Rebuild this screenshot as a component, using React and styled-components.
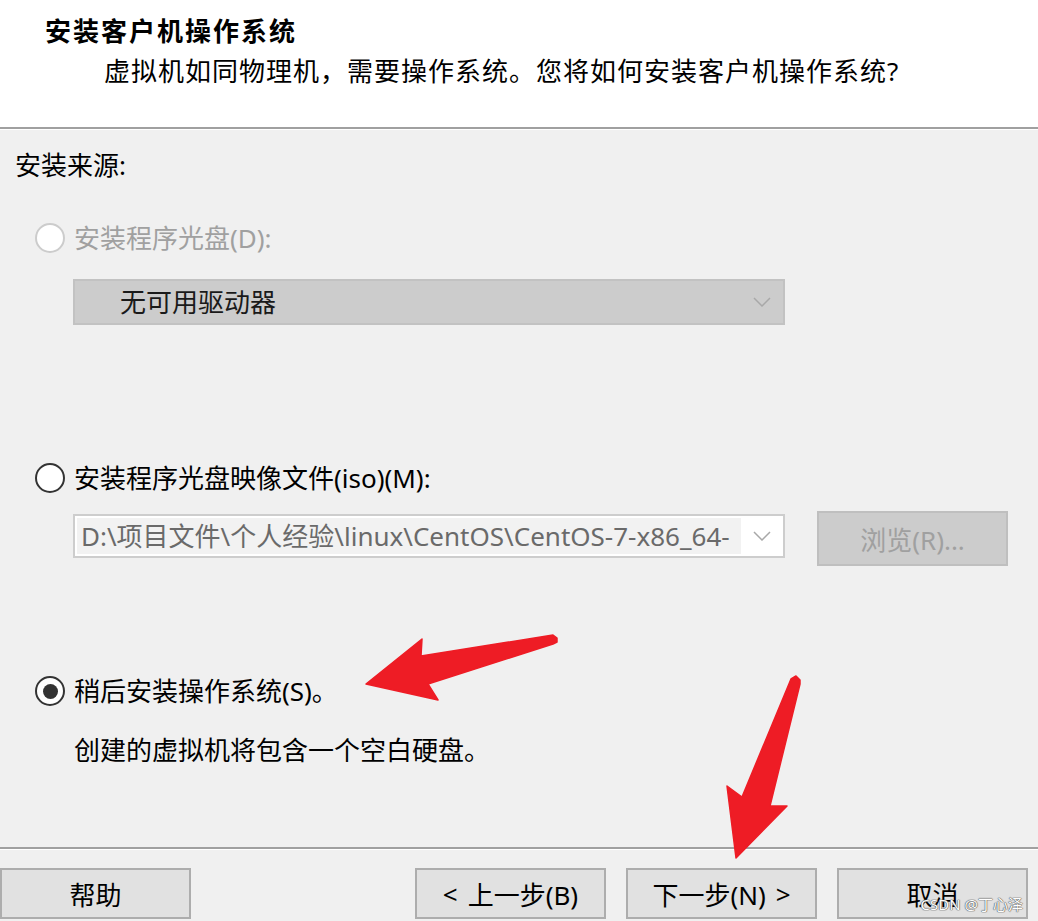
import React from 'react'
import styled, { createGlobalStyle } from 'styled-components'

const GlobalStyle = createGlobalStyle`
  html, body {
    margin: 0;
    padding: 0;
    background: #f0f0f0;
  }
  body {
    font-family: "Noto Sans", "Noto Sans CJK SC", sans-serif;
    color: #000;
  }
`

const Page = styled.div`
  position: relative;
  width: 1038px;
  height: 921px;
  overflow: hidden;
  display: flex;
  flex-direction: column;
  background: #f0f0f0;
`

const Header = styled.div`
  height: 129px;
  box-sizing: border-box;
  background: #ffffff;
  padding: 14px 0 0 45px;
  border-bottom: 2px solid #a0a0a0;
  box-shadow: 0 1px 0 #ffffff;
`

const Title = styled.div`
  font-size: 26px;
  line-height: 34px;
  font-weight: 700;
  letter-spacing: 2px;
`

const Subtitle = styled.div`
  margin: 6px 0 0 59px;
  font-size: 26px;
  line-height: 34px;
  letter-spacing: 1px;
`

const Body = styled.div`
  flex: 1;
  padding: 19px 0 0 15px;
  display: flex;
  flex-direction: column;
`

const Label = styled.div`
  font-size: 26px;
  line-height: 34px;
`

const RadioRow = styled.div`
  display: flex;
  align-items: center;
  gap: 9px;
  margin-top: ${(p) => p.top}px;
  margin-left: 20px;
  font-size: 26px;
  line-height: 34px;
  color: ${(p) => (p.disabled ? '#a0a0a0' : '#000')};
`

const RadioCircle = styled.span`
  width: 30px;
  height: 30px;
  box-sizing: border-box;
  border-radius: 50%;
  background: #ffffff;
  border: 2px solid ${(p) => (p.disabled ? '#cccccc' : '#333333')};
  display: flex;
  align-items: center;
  justify-content: center;
`

const RadioDot = styled.span`
  width: 15px;
  height: 15px;
  border-radius: 50%;
  background: #333333;
`

const Indented = styled.div`
  margin-left: 58px;
  margin-top: ${(p) => p.top}px;
`

const Select = styled.div`
  width: 712px;
  height: ${(p) => p.h}px;
  box-sizing: border-box;
  display: flex;
  align-items: center;
  border: 2px solid ${(p) => (p.disabled ? '#c2c2c2' : '#cdcdcd')};
  background: ${(p) => (p.disabled ? '#cccccc' : '#ffffff')};
  padding: 0 10px 0 ${(p) => p.pad}px;
  font-size: 26px;
`

const SelectText = styled.span`
  flex: 1;
  min-width: 0;
  white-space: nowrap;
  overflow: hidden;
  color: ${(p) => (p.muted ? '#6a6a6a' : '#1a1a1a')};
  line-height: 36px;
  background: ${(p) => (p.muted ? '#f2f2f2' : 'transparent')};
  padding-left: ${(p) => (p.muted ? 4 : 0)}px;
  margin-right: 12px;
`

const Chevron = styled.svg`
  width: 18px;
  height: 10px;
  flex: none;
  margin-right: 2px;
`

const FileRow = styled.div`
  display: flex;
  align-items: flex-start;
  gap: 32px;
  margin-left: 58px;
  margin-top: 16px;
`

const SelectWrap = styled.div`
  margin-top: 3px;
`

const BrowseButton = styled.div`
  width: 191px;
  height: 55px;
  box-sizing: border-box;
  background: #cccccc;
  border: 2px solid #bfbfbf;
  color: #a0a0a0;
  font-size: 26px;
  display: flex;
  align-items: center;
  justify-content: center;
`

const Description = styled.div`
  margin: 25px 0 0 59px;
  font-size: 26px;
  line-height: 34px;
`

const Footer = styled.div`
  height: 74px;
  box-sizing: border-box;
  border-top: 2px solid #a0a0a0;
  box-shadow: inset 0 1px 0 #ffffff;
  padding: 19px 10px 0 0;
  display: flex;
  gap: 20px;
`

const Spacer = styled.div`
  flex: 1;
`

const Button = styled.div`
  width: 191px;
  height: 51px;
  box-sizing: border-box;
  background: #e1e1e1;
  border: 2px solid #adadad;
  font-size: 26px;
  display: flex;
  align-items: center;
  justify-content: center;
  gap: ${(p) => p.gap || 0}px;
`

const Overlay = styled.svg`
  position: absolute;
  left: 0;
  top: 0;
  width: 1038px;
  height: 921px;
  pointer-events: none;
`

const Watermark = styled.div`
  position: absolute;
  right: 15px;
  bottom: 8px;
  font-size: 15px;
  line-height: 18px;
  color: #ffffff;
  text-shadow: 0 0 1px #555, 0 0 1px #555, 0 0 1px #555;
`

const Arrow = () => (
  <Chevron viewBox="0 0 18 10">
    <polyline points="1,1 9,9 17,1" fill="none" stroke="#a8a8a8" strokeWidth="1.5" />
  </Chevron>
)

export default function App() {
  return (
    <Page>
      <GlobalStyle />
      <Header>
        <Title>安装客户机操作系统</Title>
        <Subtitle>虚拟机如同物理机，需要操作系统。您将如何安装客户机操作系统?</Subtitle>
      </Header>
      <Body>
        <Label>安装来源:</Label>
        <RadioRow top={39} disabled>
          <RadioCircle disabled />
          安装程序光盘(D):
        </RadioRow>
        <Indented top={24}>
          <Select disabled h={46} pad={45}>
            <SelectText>无可用驱动器</SelectText>
            <Arrow />
          </Select>
        </Indented>
        <RadioRow top={136}>
          <RadioCircle />
          安装程序光盘映像文件(iso)(M):
        </RadioRow>
        <FileRow>
          <SelectWrap>
            <Select h={44} pad={2}>
              <SelectText muted>D:\项目文件\个人经验\linux\CentOS\CentOS-7-x86_64-</SelectText>
              <Arrow />
            </Select>
          </SelectWrap>
          <BrowseButton>浏览(R)...</BrowseButton>
        </FileRow>
        <RadioRow top={108}>
          <RadioCircle>
            <RadioDot />
          </RadioCircle>
          稍后安装操作系统(S)。
        </RadioRow>
        <Description>创建的虚拟机将包含一个空白硬盘。</Description>
      </Body>
      <Footer>
        <Button>帮助</Button>
        <Spacer />
        <Button gap={10}>
          <span>&lt;</span>
          <span>上一步(B)</span>
        </Button>
        <Button gap={10}>
          <span>下一步(N)</span>
          <span>&gt;</span>
        </Button>
        <Button>取消</Button>
      </Footer>
      <Overlay viewBox="0 0 1038 921">
        <g fill="#ee1c25" stroke="#ee1c25" strokeWidth="1.5" strokeLinejoin="round">
          <polygon points="366,684 422,639 421,656 553,635 557,638 557,642 553,644 428,684 438,700" />
          <polygon points="791,679 796,676 800,680 800,684 770,806 787,806 736,858 727,786 742,797" />
        </g>
      </Overlay>
      <Watermark>CSDN @丁心泽</Watermark>
    </Page>
  )
}
